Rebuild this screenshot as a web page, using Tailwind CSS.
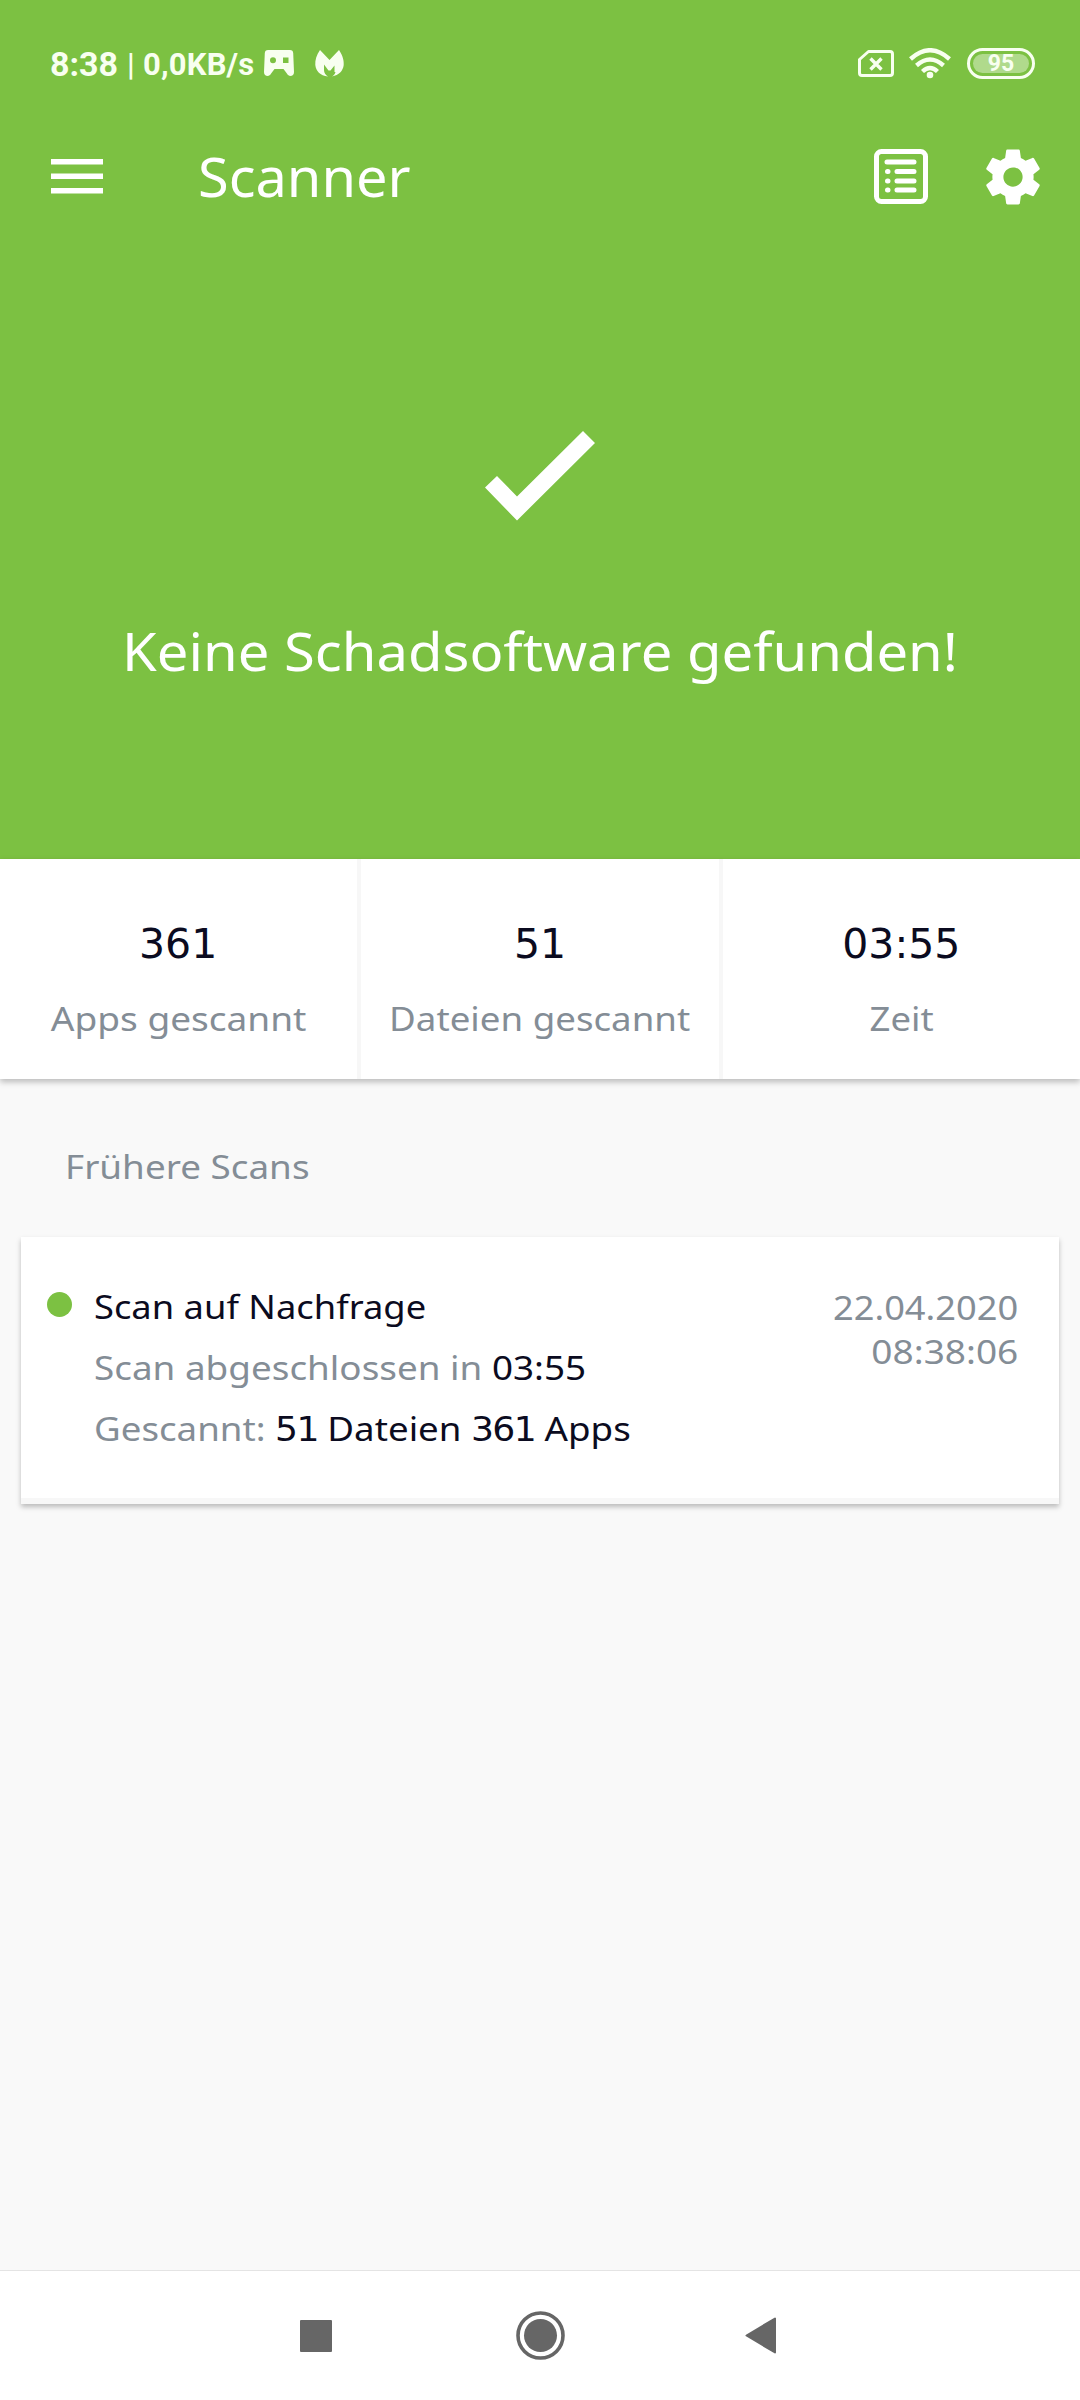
<!DOCTYPE html>
<html lang="de">
<head>
<meta charset="utf-8">
<title>Scanner</title>
<script src="https://cdn.jsdelivr.net/npm/@tailwindcss/browser@4"></script>
</head>
<body class="bg-[#f9f9f9]">
<div class="w-[1080px] h-[2400px] flex flex-col overflow-hidden font-['Noto_Sans',sans-serif] text-[33.5px] text-[#848d96]">
  <header class="h-[859px] shrink-0 bg-[#7cc142] text-white flex flex-col">
    <!-- status bar -->
    <div class="h-[126px] flex items-center pl-[50px] pr-[45px] font-['Roboto',sans-serif] font-bold text-[#f8fff0]">
      <span class="text-[34px] leading-10 pt-px">8:38</span>
      <span class="text-[31px] leading-10 ml-[9px] pt-[3px] tracking-[0.2px]"><span class="font-medium">|</span> 0,0KB/s</span>
      <svg class="ml-[10px] w-[30px] h-[26px]" viewBox="0 0 30 26"><path fill="currentColor" fill-rule="evenodd" d="M4 0H26Q29 0 29.2 3L30 22Q30 26 26 26Q24 26 22.500 23L19.500 19H10.500L7.500 23Q6 26 4 26Q0 26 0 22L.8 3Q1 0 4 0ZM9 7.300A3 3 0 1 0 9 13.300A3 3 0 1 0 9 7.300ZM19 7.500V13H24.500V7.500Z"/></svg>
      <svg class="ml-[21px] w-[29px] h-[27px]" viewBox="0 0 29 27"><path fill="currentColor" d="M5 0L14.500 10L24 0C28 6 29 11 28.700 15C28 21 24 25 17 26.500C18.500 25.500 20 24 20.500 22H19.500V15.500L15.500 20.500H13.500L9 14.500V20C9 23 10.500 25 13 26.500C5 25.500 1 21 .3 15C0 10 1.500 5 5 0Z"/></svg>
      <svg class="ml-auto w-9 h-[27px]" viewBox="0 0 36 27" fill="none" stroke="currentColor" stroke-width="3"><path stroke-linejoin="round" d="M10.500 1.500H32Q34.500 1.500 34.500 4V23Q34.500 25.500 32 25.500H4Q1.500 25.500 1.500 23V9.500Z"/><path stroke-width="3.400" d="M12.500 8.500L23.500 19.500M23.500 8.500L12.500 19.500"/></svg>
      <svg class="ml-[15px] w-[42px] h-[31px]" viewBox="0 0 42 31" fill="none" stroke="currentColor" stroke-width="4.400"><path d="M1.500 11Q21-6.500 40.500 11M7.500 17.500Q21 5.500 34.500 17.500M13.500 23.500Q21 16.500 28.500 23.500"/><circle cx="21" cy="27" r="3.300" fill="currentColor" stroke="none"/></svg>
      <div class="ml-4 w-[68px] h-[31px] rounded-full border-[3px] border-current p-[3px] flex">
        <div class="flex-1 rounded-full bg-[#b0da8c] flex items-center justify-center text-[23px] leading-none">95</div>
      </div>
    </div>
    <!-- app bar -->
    <div class="h-[101px] flex items-center pl-[51px] pr-[34px]">
      <svg class="w-[52px] h-[35px]" viewBox="0 0 52 35" fill="currentColor"><path d="M0 0H52V5.500H0ZM0 14.500H52V20H0ZM0 29H52V34.500H0Z"/></svg>
      <h1 class="ml-[95px] pb-[2px] text-[54px] leading-[80px] origin-left scale-x-[1.035]">Scanner</h1>
      <svg class="ml-auto w-[54px] h-[56px]" viewBox="0 0 54 56"><rect x="2.500" y="2.500" width="49" height="50" rx="5" fill="none" stroke="currentColor" stroke-width="5"/><g stroke="currentColor" stroke-width="5" stroke-linecap="round"><path d="M13 13H40M23 22.500H40M23 32H40M23 41H40M13.500 22.500H14M13.500 32H14M13.500 41H14"/></g></svg>
      <svg class="ml-[52px] w-[66px] h-[66px]" viewBox="0 0 24 24"><path fill="currentColor" d="M19.430 12.980c.04-.32.07-.64.07-.98s-.03-.66-.07-.98l2.110-1.650c.19-.15.24-.42.12-.64l-2-3.460c-.12-.22-.39-.3-.61-.22l-2.490 1c-.52-.4-1.080-.73-1.690-.98l-.38-2.650C14.460 2.180 14.250 2 14 2h-4c-.25 0-.46.18-.49.42l-.38 2.650c-.61.25-1.170.59-1.690.98l-2.490-1c-.23-.09-.49 0-.61.22l-2 3.460c-.13.22-.07.49.12.64l2.110 1.650c-.04.32-.07.65-.07.98s.03.66.07.98l-2.110 1.650c-.19.15-.24.42-.12.64l2 3.460c.12.22.39.3.61.22l2.490-1c.52.4 1.080.73 1.690.98l.38 2.650c.03.24.24.42.49.42h4c.25 0 .46-.18.49-.42l.38-2.650c.61-.25 1.170-.59 1.690-.98l2.490 1c.23.09.49 0 .61-.22l2-3.460c.12-.22.07-.49-.12-.64l-2.110-1.650zM12 15.500c-1.930 0-3.500-1.570-3.500-3.500s1.570-3.500 3.500-3.500 3.500 1.570 3.500 3.500-1.570 3.500-3.500 3.500z"/></svg>
    </div>
    <!-- scan result -->
    <div class="flex flex-col items-center">
      <svg class="mt-[204px] w-[110px] h-[90px]" viewBox="0 0 110 90"><path fill="currentColor" d="M0 56.500L12 45L32 65.500L98 0L110 12L32 89.500Z"/></svg>
      <p class="mt-[100px] text-[52px] leading-[60px] scale-x-[1.08] whitespace-nowrap">Keine Schadsoftware gefunden!</p>
    </div>
  </header>
  <section class="h-[220px] shrink-0 bg-white flex text-center shadow-[0_3px_6px_rgba(0,0,0,0.25)]">
    <div class="flex-1 pt-[61px] border-r-4 border-[#f7f7f7]">
      <div class="pr-px text-[41px] leading-[48px] text-[#0b0b20] font-['DejaVu_Sans']">361</div>
      <div class="mt-[30px] leading-10 scale-x-[1.105]">Apps gescannt</div>
    </div>
    <div class="flex-1 pt-[61px] border-r-4 border-[#f7f7f7]">
      <div class="text-[41px] leading-[48px] text-[#0b0b20] font-['DejaVu_Sans']">51</div>
      <div class="mt-[30px] leading-10 scale-x-[1.095]">Dateien gescannt</div>
    </div>
    <div class="flex-1 pt-[61px]">
      <div class="text-[41px] leading-[48px] text-[#0b0b20] font-['DejaVu_Sans']">03:55</div>
      <div class="mt-[30px] leading-10 scale-x-[1.09]">Zeit</div>
    </div>
  </section>
  <h2 class="mt-[67px] ml-[65px] leading-10 origin-left scale-x-[1.1]">Frühere Scans</h2>
  <article class="mt-[51px] mx-[21px] h-[267px] shrink-0 bg-white border-b-[6px] border-[#f7f7f7] shadow-[0_3px_5px_rgba(0,0,0,0.25)] flex items-start">
    <span class="mt-[55px] ml-[26px] size-[25px] rounded-full bg-[#7cc142]"></span>
    <div class="ml-[22px] pt-[39px] leading-[61px] whitespace-nowrap">
      <p class="text-[#0b0b20] origin-left scale-x-[1.084]">Scan auf Nachfrage</p>
      <p class="origin-left scale-x-[1.1]">Scan abgeschlossen in <span class="text-[#0b0b20]">03:55</span></p>
      <p class="origin-left scale-x-[1.095]">Gescannt: <span class="text-[#0b0b20]"><span class="font-['DejaVu_Sans'] text-[33px] leading-none tracking-[-1.5px]">51</span> Dateien <span class="font-['DejaVu_Sans'] text-[33px] leading-none tracking-[-1.5px]">361</span> Apps</span></p>
    </div>
    <div class="ml-auto pt-[48px] pr-[41px] text-right leading-[44px]"><p class="origin-right scale-x-[1.082]">22.04.2020</p><p class="origin-right scale-x-[1.105]">08:38:06</p></div>
  </article>
  <nav class="mt-auto h-[130px] shrink-0 bg-white border-t border-[#e4e4e4] flex items-center pl-[300px] text-[#666]">
    <svg class="size-8" viewBox="0 0 32 32"><rect width="32" height="32" rx="1" fill="currentColor"/></svg>
    <svg class="ml-[184px] size-[49px]" viewBox="0 0 49 49"><circle cx="24.500" cy="24.500" r="22.500" fill="none" stroke="currentColor" stroke-width="3.600"/><circle cx="24.500" cy="24.500" r="16.500" fill="currentColor"/></svg>
    <svg class="ml-[180px] w-[31px] h-[37px]" viewBox="0 0 31 37"><path fill="currentColor" stroke="currentColor" stroke-width="2" stroke-linejoin="round" d="M1.500 18.500L30 1.500V35.500Z"/></svg>
  </nav>
</div>
</body>
</html>
